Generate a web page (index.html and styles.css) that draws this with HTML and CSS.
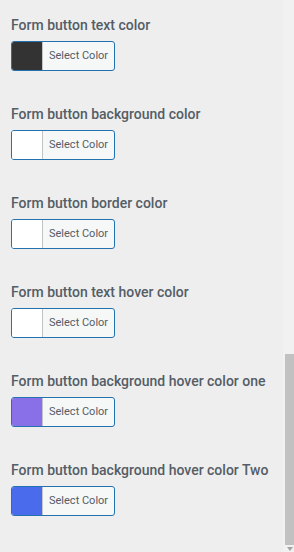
FILE: index.html
```html
<!DOCTYPE html>
<html>
<head>
<meta charset="utf-8">
<link rel="stylesheet" href="styles.css">
</head>
<body>
<div class="page">
  <div class="content">
    <div class="field">
      <div class="label">Form button text color</div>
      <button class="picker"><span class="swatch sw-dark"></span><span class="picker-text">Select Color</span></button>
    </div>
    <div class="field">
      <div class="label">Form button background color</div>
      <button class="picker"><span class="swatch sw-white"></span><span class="picker-text">Select Color</span></button>
    </div>
    <div class="field">
      <div class="label">Form button border color</div>
      <button class="picker"><span class="swatch sw-white"></span><span class="picker-text">Select Color</span></button>
    </div>
    <div class="field">
      <div class="label">Form button text hover color</div>
      <button class="picker"><span class="swatch sw-white"></span><span class="picker-text">Select Color</span></button>
    </div>
    <div class="field">
      <div class="label">Form button background hover color one</div>
      <button class="picker"><span class="swatch sw-purple"></span><span class="picker-text">Select Color</span></button>
    </div>
    <div class="field">
      <div class="label">Form button background hover color Two</div>
      <button class="picker"><span class="swatch sw-blue"></span><span class="picker-text">Select Color</span></button>
    </div>
  </div>
  <div class="scrollbar">
    <div class="thumb"></div>
    <div class="arrow"></div>
  </div>
</div>
</body>
</html>
```

FILE: styles.css
```css
* { box-sizing: border-box; }
html, body { margin: 0; padding: 0; }
body {
  background: #eeeeee;
  font-family: Roboto, "Liberation Sans", sans-serif;
  width: 294px;
  height: 552px;
  overflow: hidden;
}
.page {
  display: flex;
  height: 552px;
}
.content {
  flex: 1;
  padding: 15px 0 0 11px;
}
.field {
  display: flex;
  flex-direction: column;
  align-items: flex-start;
  margin-bottom: 33px;
}
.label {
  font-size: 14px;
  line-height: 20px;
  font-weight: 500;
  color: #555d66;
  margin-bottom: 6px;
  white-space: nowrap;
}
.picker {
  display: flex;
  align-items: stretch;
  height: 30px;
  width: 104px;
  padding: 0;
  border: 1px solid #2271b1;
  border-radius: 3px;
  background: #f6f7f7;
  overflow: hidden;
  font-family: inherit;
}
.swatch {
  width: 31px;
  border-right: 1px solid #c3c4c7;
  flex: none;
}
.sw-dark { background: #333333; }
.sw-white { background: #ffffff; }
.sw-purple { background: #8a70e8; }
.sw-blue { background: #4a6cec; }
.picker-text {
  display: flex;
  align-items: center;
  padding-left: 6px;
  padding-bottom: 1px;
  font-size: 11px;
  color: #555d66;
  white-space: nowrap;
}
.scrollbar {
  width: 11px;
  flex: none;
  background: #f1f1f1;
  display: flex;
  flex-direction: column;
  align-items: flex-end;
}
.thumb {
  margin-top: 354px;
  width: 9px;
  height: 191px;
  background: #c1c1c1;
}
.arrow {
  margin-top: 2px;
  width: 0;
  height: 0;
  margin-right: 1px;
  border-left: 3.5px solid transparent;
  border-right: 3.5px solid transparent;
  border-top: 4px solid #a3a3a3;
}
```
